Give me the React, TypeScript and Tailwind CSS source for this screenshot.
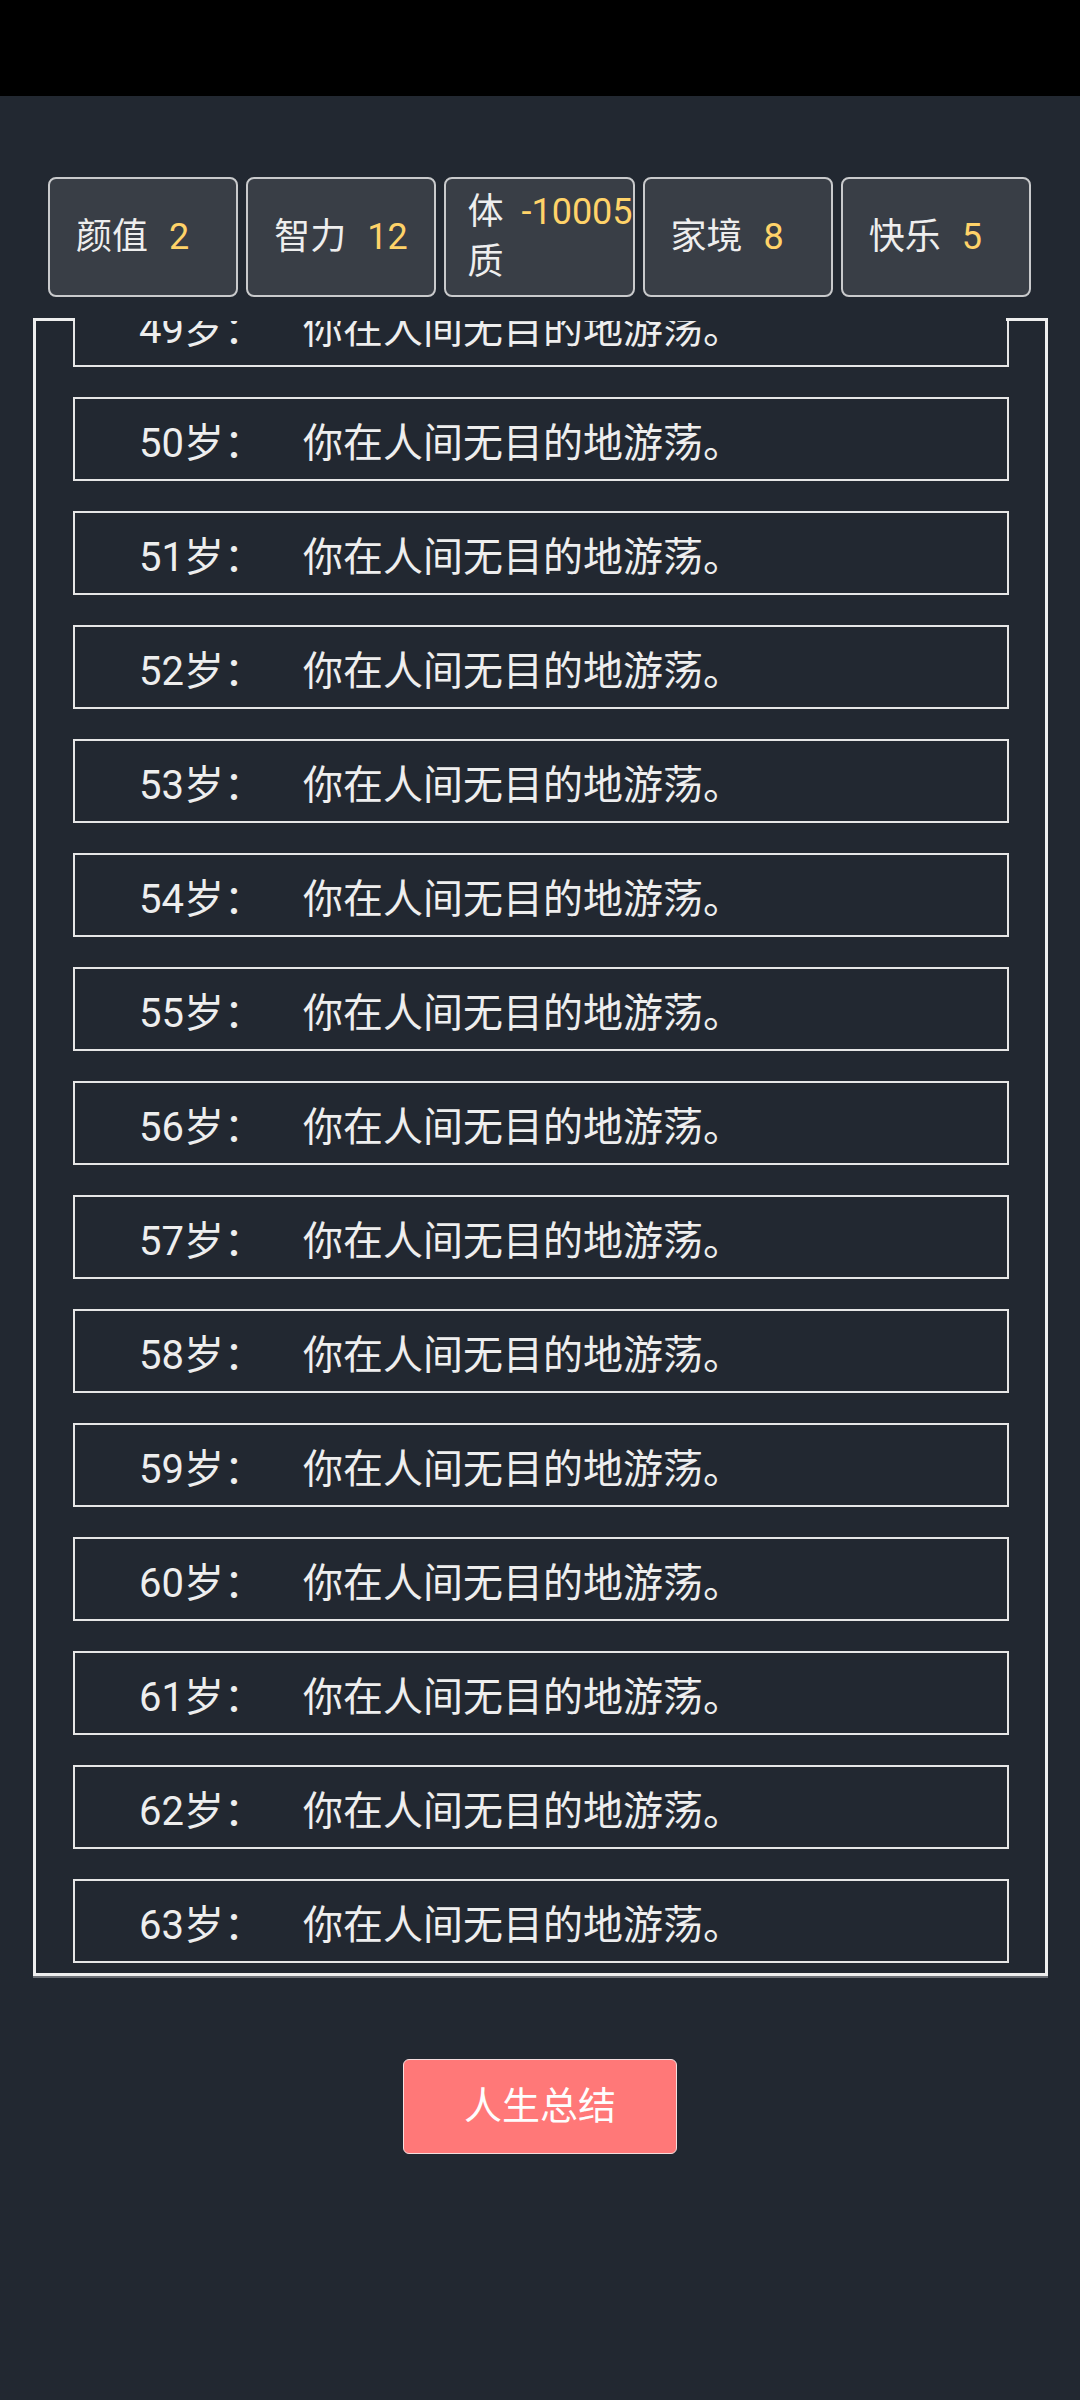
import React from "react";

const stats: { label: string; value: string; narrow?: boolean }[] = [
  { label: "颜值", value: "2" },
  { label: "智力", value: "12" },
  { label: "体质", value: "-10005", narrow: true },
  { label: "家境", value: "8" },
  { label: "快乐", value: "5" },
];

const ages = Array.from({ length: 15 }, (_, i) => 49 + i);

export default function App() {
  return (
    <div
      className="min-h-[2400px] w-[1080px] bg-[#222831] text-[#eeeeee]"
      style={{ fontFamily: 'Roboto, "Noto Sans CJK SC", "Noto Sans", sans-serif' }}
    >
      <div className="h-[96px] bg-black" />

      <div className="mt-[81px] grid grid-cols-5 gap-[8px] pl-[48px] pr-[49px]">
        {stats.map((s) => (
          <div
            key={s.label}
            className={`flex h-[120px] flex-col justify-center rounded-[8px] border-2 border-[#c9cacc] bg-[#393e46] ${
              s.narrow ? "pl-[21px]" : "pl-[26px]"
            }`}
          >
            <div className="flex items-baseline gap-[21px] text-[36px] leading-[50px]">
              <span className="min-w-0 break-all">{s.label}</span>
              <span className="shrink-0 text-[#ffd369]">{s.value}</span>
            </div>
          </div>
        ))}
      </div>

      <div className="ml-[33px] mr-[32px] mt-[21px] border-x-[3px] border-b-[3px] border-[#eeeeee] shadow-[0_2px_0_#6b6f76]">
        <div className="flex h-[3px]">
          <div className="w-[39px] border-t-[3px] border-[#eeeeee]" />
          <div className="flex-1" />
          <div className="w-[39px] border-t-[3px] border-[#eeeeee]" />
        </div>
        <div className="overflow-hidden pb-[10px] pl-[37px] pr-[36px]">
          {ages.map((a, i) => (
            <div
              key={a}
              className={`flex h-[84px] items-center border-2 border-[#e6e6e6] pl-[64px] pt-[9px] text-[40px] leading-[48px] ${
                i === 0 ? "-mt-[38px]" : "mt-[30px]"
              }`}
            >
              <span className="w-[164px] shrink-0">{a}岁：</span>
              <span>你在人间无目的地游荡。</span>
            </div>
          ))}
        </div>
      </div>

      <div className="mt-[83px] flex justify-center">
        <button className="flex h-[95px] w-[274px] items-center justify-center rounded-[6px] border border-[#f4dede] bg-[#ff7878] text-[38px] text-[#fdfdfd]">
          人生总结
        </button>
      </div>
    </div>
  );
}
